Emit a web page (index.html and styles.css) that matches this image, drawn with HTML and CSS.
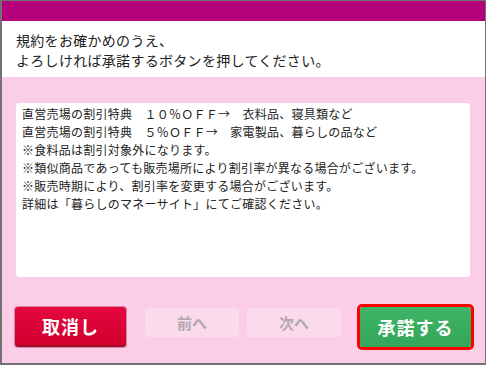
FILE: index.html
```html
<!DOCTYPE html>
<html lang="ja">
<head>
<meta charset="utf-8">
<title>規約確認</title>
<link rel="stylesheet" href="styles.css">
</head>
<body>
<div class="frame">
  <div class="topbar"></div>
  <div class="header">
    <p>規約をお確かめのうえ、<br>よろしければ承諾するボタンを押してください。</p>
  </div>
  <div class="main">
    <div class="terms">
      <p>直営売場の割引特典　１０％ＯＦＦ→　衣料品、寝具類など</p>
      <p>直営売場の割引特典　５％ＯＦＦ→　家電製品、暮らしの品など</p>
      <p>※食料品は割引対象外になります。</p>
      <p>※類似商品であっても販売場所により割引率が異なる場合がございます。</p>
      <p>※販売時期により、割引率を変更する場合がございます。</p>
      <p>詳細は「暮らしのマネーサイト」にてご確認ください。</p>
    </div>
    <div class="buttons">
      <button class="btn cancel">取消し</button>
      <div class="nav">
        <button class="btn disabled">前へ</button>
        <button class="btn disabled">次へ</button>
      </div>
      <div class="accept-wrap"><button class="btn accept">承諾する</button></div>
    </div>
  </div>
</div>
</body>
</html>
```

FILE: styles.css
```css
* { box-sizing: border-box; }
html, body { margin: 0; padding: 0; }
body {
  width: 486px;
  height: 365px;
  overflow: hidden;
  font-family: "Noto Sans CJK JP", "Noto Sans", sans-serif;
  color: #222;
}
.frame {
  width: 486px;
  height: 365px;
  border-style: solid;
  border-color: #727272;
  border-width: 1px 1px 2px 2px;
  display: flex;
  flex-direction: column;
  background: #fbcde6;
}
.topbar {
  height: 20px;
  background: #b5007b;
  flex: none;
}
.header {
  background: #fff;
  height: 56px;
  flex: none;
  padding: 9px 14px 0 14px;
}
.header p {
  margin: 0;
  font-size: 14px;
  line-height: 20px;
  letter-spacing: 0.3px;
  color: #222;
}
.main {
  flex: 1;
  display: flex;
  flex-direction: column;
  padding: 26px 15px 0 14px;
}
.terms {
  background: #fff;
  height: 174px;
  border-radius: 3px;
  padding: 2px 6px;
}
.terms p {
  margin: 0;
  font-size: 12px;
  line-height: 18px;
  letter-spacing: 0.25px;
  color: #222;
  white-space: nowrap;
}
.buttons {
  margin: 30px -4px 0 -1px;
  display: flex;
  align-items: flex-start;
}
.btn {
  font-family: "Noto Sans CJK JP", "Noto Sans", sans-serif;
  border: none;
  padding: 0;
  margin: 0;
  cursor: pointer;
  flex: none;
}
.cancel {
  width: 111px;
  height: 40px;
  background: linear-gradient(#e4073f, #d2002f);
  border-bottom: 2px solid #9e0f2c;
  box-shadow: 0 0 0 1px rgba(150, 0, 40, 0.35);
  border-radius: 3px;
  color: #fff;
  font-size: 18px;
  font-weight: bold;
  letter-spacing: 1px;
}
.nav {
  display: flex;
  flex: none;
  gap: 8px;
  margin-left: 19px;
  margin-top: 1px;
}
.disabled {
  width: 94px;
  height: 29px;
  background: #fbdaec;
  border-radius: 3px;
  color: #b3a7ad;
  font-size: 15px;
  font-weight: bold;
}
.accept-wrap {
  flex: none;
  margin-left: 16px;
  margin-top: -3px;
  border: 3px solid #ff0000;
  border-radius: 5px;
  width: 117px;
  height: 46px;
}
.accept {
  width: 111px;
  height: 40px;
  background: linear-gradient(#40b466, #33a659);
  border-radius: 2px;
  color: #fff;
  font-size: 18px;
  font-weight: bold;
  display: block;
  letter-spacing: 1px;
}
```
